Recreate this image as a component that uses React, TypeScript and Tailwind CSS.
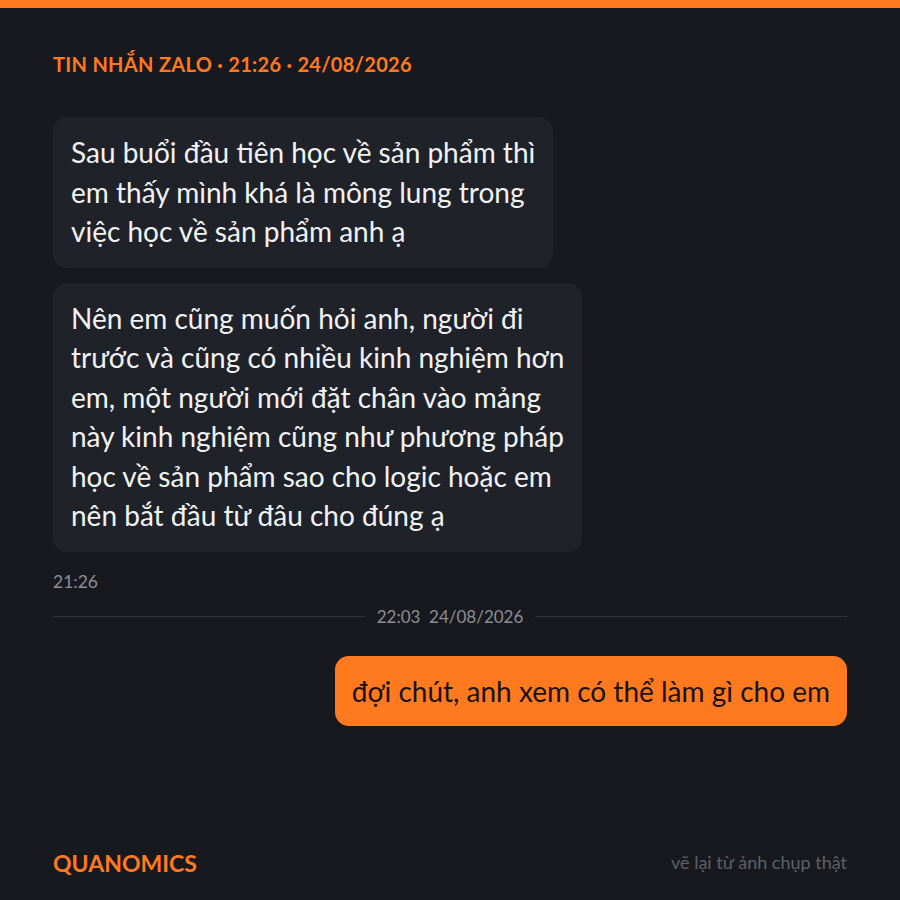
const FONT = "font-['Lato','Noto_Sans',sans-serif]";

const incoming = [
  ["Sau buổi đầu tiên học về sản phẩm thì", "em thấy mình khá là mông lung trong", "việc học về sản phẩm anh ạ"],
  [
    "Nên em cũng muốn hỏi anh, người đi",
    "trước và cũng có nhiều kinh nghiệm hơn",
    "em, một người mới đặt chân vào mảng",
    "này kinh nghiệm cũng như phương pháp",
    "học về sản phẩm sao cho logic hoặc em",
    "nên bắt đầu từ đâu cho đúng ạ",
  ],
];

const Bubble = ({ lines }: { lines: string[] }) => (
  <div className="self-start rounded-[14px] bg-[#202229] px-[18px] pt-[16px] pb-[16px] text-[28px] leading-[39.5px] text-[#f1f2f4]">
    {lines.map((l, i) => (
      <div key={i} className="whitespace-nowrap">
        {l}
      </div>
    ))}
  </div>
);

const App = () => {
  return (
    <div className={`${FONT} flex h-[900px] w-[900px] flex-col bg-[#18191e]`}>
      <div className="h-[8px] bg-[#ff7a1f]" />

      <div className="flex flex-1 flex-col px-[53px]">
        <h1 className="mt-[41px] text-[20px] font-bold tracking-[0.3px] text-[#ff7a1f]">
          TIN NHẮN ZALO · 21:26 · 24/08/2026
        </h1>

        {/* incoming */}
        <div className="mt-[38px] flex flex-col gap-[15px]">
          {incoming.map((lines, i) => (
            <Bubble key={i} lines={lines} />
          ))}
        </div>
        <div className="mt-[17px] text-[17.5px] text-[#8b8e96]">21:26</div>

        {/* divider */}
        <div className="mt-[9px] flex items-center gap-3">
          <div className="h-px flex-1 bg-[#32343b]" />
          <span className="text-[17px] text-[#8b8e96]">22:03&nbsp;&nbsp;24/08/2026</span>
          <div className="h-px flex-1 bg-[#32343b]" />
        </div>

        {/* outgoing */}
        <div className="mt-[27px] flex justify-end">
          <div className="rounded-[14px] bg-[#ff7a1f] px-[17px] py-[15px] text-[28px] leading-[40px] text-[#1a1208]">
            đợi chút, anh xem có thể làm gì cho em
          </div>
        </div>

        <div className="mt-auto mb-[20px] flex items-center justify-between">
          <span className="text-[23px] font-bold text-[#ff7a1f]">QUANOMICS</span>
          <span className="text-[18px] text-[#5d6068]">vẽ lại từ ảnh chụp thật</span>
        </div>
      </div>
    </div>
  );
};

export default App;
